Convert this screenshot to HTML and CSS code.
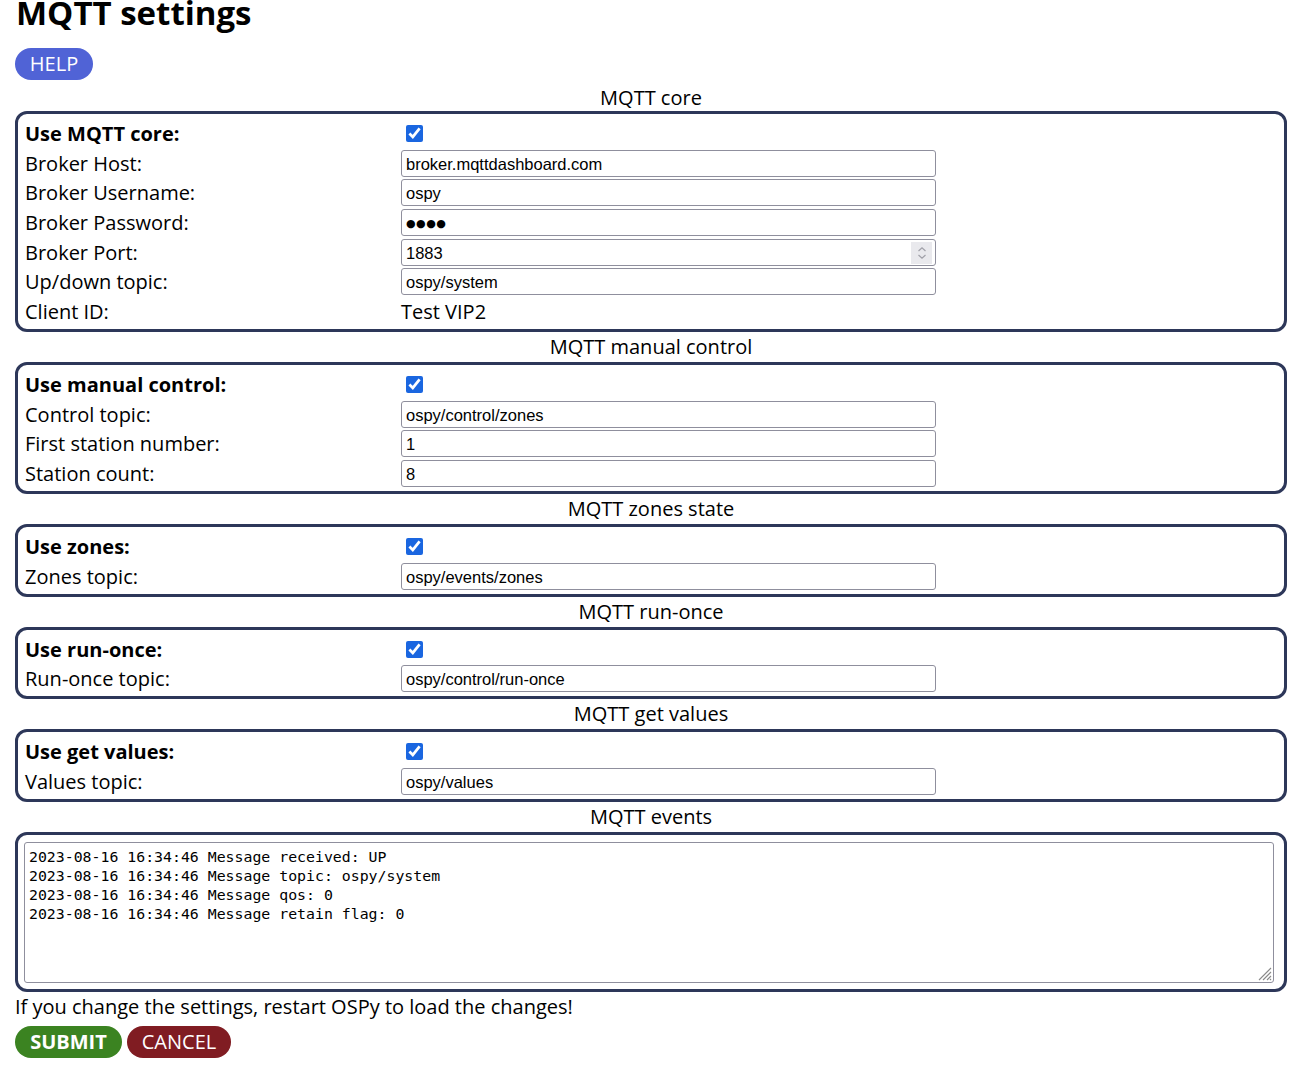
FILE: index.html
```html
<!DOCTYPE html>
<html>
<head>
<meta charset="utf-8">
<link rel="stylesheet" href="styles.css">
</head>
<body>
<h1 class="title">MQTT settings</h1>
<div class="help-row"><button class="btn btn-help">HELP</button></div>

<div class="legend legend-first">MQTT core</div>
<div class="box">
  <div class="row"><span class="lbl bold">Use MQTT core:</span><span class="val"><input type="checkbox" class="chk" checked></span></div>
  <div class="row"><span class="lbl">Broker Host:</span><span class="val"><input class="inp" type="text" value="broker.mqttdashboard.com"></span></div>
  <div class="row"><span class="lbl">Broker Username:</span><span class="val"><input class="inp" type="text" value="ospy"></span></div>
  <div class="row"><span class="lbl">Broker Password:</span><span class="val"><input class="inp pwd" type="text" value="&#9679;&#9679;&#9679;&#9679;"></span></div>
  <div class="row"><span class="lbl">Broker Port:</span><span class="val num"><input class="inp" type="text" value="1883"><span class="spin"><svg width="10" height="14" viewBox="0 0 10 14"><path d="M1.5 5 L5 1.8 L8.5 5 M1.5 9 L5 12.2 L8.5 9" fill="none" stroke="#a0a0a8" stroke-width="1.2"/></svg></span></span></div>
  <div class="row"><span class="lbl">Up/down topic:</span><span class="val"><input class="inp" type="text" value="ospy/system"></span></div>
  <div class="row"><span class="lbl">Client ID:</span><span class="val txt">Test VIP2</span></div>
</div>

<div class="legend">MQTT manual control</div>
<div class="box">
  <div class="row"><span class="lbl bold">Use manual control:</span><span class="val"><input type="checkbox" class="chk" checked></span></div>
  <div class="row"><span class="lbl">Control topic:</span><span class="val"><input class="inp" type="text" value="ospy/control/zones"></span></div>
  <div class="row"><span class="lbl">First station number:</span><span class="val"><input class="inp" type="text" value="1"></span></div>
  <div class="row"><span class="lbl">Station count:</span><span class="val"><input class="inp" type="text" value="8"></span></div>
</div>

<div class="legend">MQTT zones state</div>
<div class="box">
  <div class="row"><span class="lbl bold">Use zones:</span><span class="val"><input type="checkbox" class="chk" checked></span></div>
  <div class="row"><span class="lbl">Zones topic:</span><span class="val"><input class="inp" type="text" value="ospy/events/zones"></span></div>
</div>

<div class="legend">MQTT run-once</div>
<div class="box">
  <div class="row"><span class="lbl bold">Use run-once:</span><span class="val"><input type="checkbox" class="chk" checked></span></div>
  <div class="row"><span class="lbl">Run-once topic:</span><span class="val"><input class="inp" type="text" value="ospy/control/run-once"></span></div>
</div>

<div class="legend">MQTT get values</div>
<div class="box">
  <div class="row"><span class="lbl bold">Use get values:</span><span class="val"><input type="checkbox" class="chk" checked></span></div>
  <div class="row"><span class="lbl">Values topic:</span><span class="val"><input class="inp" type="text" value="ospy/values"></span></div>
</div>

<div class="legend">MQTT events</div>
<div class="box box-events">
<div class="log-wrap">
<textarea class="log">2023-08-16 16:34:46 Message received: UP
2023-08-16 16:34:46 Message topic: ospy/system
2023-08-16 16:34:46 Message qos: 0
2023-08-16 16:34:46 Message retain flag: 0</textarea>
<svg class="grip" width="16" height="16" viewBox="0 0 16 16"><path d="M15 3 L3 15 M15 7 L7 15 M15 11 L11 15 M15 14 L14 15" stroke="#8a8a8a" stroke-width="1.1" fill="none"/></svg>
</div>
</div>

<p class="note">If you change the settings, restart OSPy to load the changes!</p>
<div class="actions">
  <button class="btn btn-submit">SUBMIT</button>
  <button class="btn btn-cancel">CANCEL</button>
</div>
</body>
</html>
```

FILE: styles.css
```css
html, body {
  margin: 0;
  padding: 0;
  background: #fff;
}
body {
  padding: 0 16px 0 15px;
  font-family: "Open Sans", "Noto Sans", sans-serif;
  font-size: 20px;
  color: #000;
}
.title {
  margin: -9px 0 0 1px;
  font-size: 33px;
  font-weight: 700;
  line-height: 43px;
}
.help-row {
  margin-top: 14px;
  height: 32px;
}
.btn {
  border: none;
  font-family: "Open Sans", "Noto Sans", sans-serif;
  font-size: 20px;
  color: #fff;
  border-radius: 16px;
  height: 32px;
  padding: 0 15px;
  line-height: 32px;
  cursor: pointer;
}
.btn-help {
  background: #5063d6;
  width: 78px;
  padding: 0;
}
.legend {
  text-align: center;
  height: 30px;
  line-height: 30px;
}
.legend-first {
  height: 31px;
  line-height: 36px;
}
.box {
  border: 3px solid #2d3759;
  border-radius: 12px;
  padding: 6px 6px 4px 6px;
  display: flex;
  flex-direction: column;
  gap: 2.67px;
}
.row {
  display: grid;
  grid-template-columns: 377px 1fr;
  height: 27px;
  align-items: center;
}
.lbl {
  padding-left: 1px;
  line-height: 27px;
  white-space: nowrap;
}
.bold {
  font-weight: 700;
}
.val {
  display: flex;
  align-items: center;
  height: 27px;
}
.val.num {
  position: relative;
  width: 535px;
}
.txt {
  line-height: 27px;
}
.chk {
  margin: 0 0 0 5px;
  width: 17px;
  height: 17px;
  accent-color: #1a66e0;
}
.inp {
  box-sizing: border-box;
  width: 535px;
  height: 27px;
  margin: 0;
  border: 1px solid #8f8f9d;
  border-radius: 3px;
  padding: 2px 4px 0 4px;
  font-family: "Liberation Sans", Arial, sans-serif;
  font-size: 16.5px;
  color: #000;
  background: #fff;
}
.pwd {
  font-family: "DejaVu Sans", sans-serif;
  font-size: 11px;
  letter-spacing: 0.5px;
}
.spin {
  position: absolute;
  right: 4px;
  top: 3px;
  width: 21px;
  height: 22px;
  background: #e9e9ed;
  display: flex;
  align-items: center;
  justify-content: center;
}
.box-events {
  padding: 7px 10px 6px 6px;
}
.log-wrap {
  position: relative;
}
.log {
  box-sizing: border-box;
  display: block;
  width: 100%;
  height: 141px;
  margin: 0;
  border: 1px solid #8f8f9d;
  border-radius: 3px;
  padding: 5px 4px;
  font-family: "DejaVu Sans Mono", monospace;
  font-size: 14.85px;
  line-height: 19px;
  color: #000;
  resize: none;
}
.grip {
  position: absolute;
  right: 2px;
  bottom: 2px;
}
.note {
  margin: 1px 0 0 0;
  line-height: 28px;
}
.actions {
  display: flex;
  gap: 5px;
  margin-top: 5px;
}
.btn-submit {
  background: #3b8321;
  font-weight: 700;
  width: 107px;
  padding: 0;
}
.btn-cancel {
  background: #801c22;
  width: 104px;
  padding: 0;
}
```
